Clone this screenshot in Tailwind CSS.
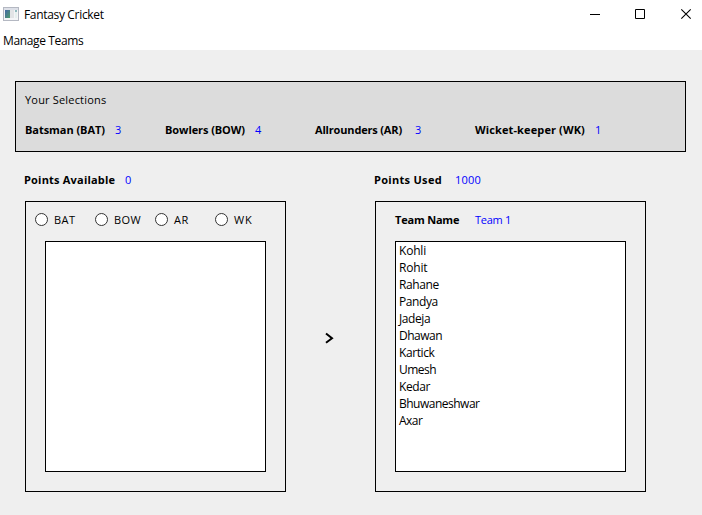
<!DOCTYPE html>
<html lang="en">
<head>
<meta charset="utf-8">
<title>Fantasy Cricket</title>
<script src="https://cdn.jsdelivr.net/npm/@tailwindcss/browser@4"></script>
</head>
<body class="w-[702px] h-[515px] overflow-hidden bg-[#efefef] text-black text-[12px] leading-[17px] whitespace-nowrap font-['Open_Sans',sans-serif] flex flex-col">
  <header class="h-[30px] shrink-0 bg-white flex items-center pl-[3px] tracking-[-0.33px]">
    <svg class="w-[16px] h-[14px] mr-[5px] -mt-[2px]" viewBox="0 0 16 14">
      <defs><linearGradient id="g" x1="0" y1="0" x2="1" y2="1"><stop offset="0" stop-color="#4568a6"/><stop offset="1" stop-color="#4f9c6c"/></linearGradient></defs>
      <rect x=".5" y=".5" width="15" height="13" fill="#f4f5f7" stroke="#b4b8c2"/>
      <rect x="1" y="1" width="14" height="2" fill="#dde0e8"/>
      <rect x="2" y="3" width="5" height="8" fill="url(#g)"/>
      <rect x="7" y="3" width="4" height="8" fill="#e2e4e6"/>
      <rect x="12" y="3" width="2" height="2" fill="#8fb9bd"/>
      <rect x="12" y="5" width="2" height="6" fill="#e6f0ee"/>
    </svg>
    <h1 class="flex-1 pb-[2px]">Fantasy Cricket</h1>
    <svg class="w-[112px] h-[30px]" viewBox="590 0 112 30" fill="none" stroke="#000">
      <path d="M590 14.5h10M635.5 9.5h9v9h-9z"/>
      <path d="M681.3 9.3l9.4 9.4M690.7 9.3l-9.4 9.4" stroke-width="1.1"/>
    </svg>
  </header>
  <nav class="h-[20px] shrink-0 bg-white pl-[3px] pt-[2px] tracking-[-0.37px]">Manage Teams</nav>
  <main class="flex-1 pt-[31px] font-['Comic_Sans_MS','Open_Sans',sans-serif] text-[11px]">
    <section class="ml-[15px] w-[671px] h-[71px] border border-black bg-[#dcdcdc] pl-[9px] pt-[9px]">
      <p class="tracking-[0.18px]">Your Selections</p>
      <div class="flex mt-[13px]">
        <b class="w-[90px] tracking-[-0.05px]">Batsman (BAT)</b><span class="w-[50px] text-[#00f]">3</span>
        <b class="w-[90px] tracking-[-0.08px]">Bowlers (BOW)</b><span class="w-[60px] text-[#00f]">4</span>
        <b class="w-[100px] tracking-[-0.17px]">Allrounders (AR)</b><span class="w-[60px] text-[#00f]">3</span>
        <b class="w-[120px] tracking-[0.12px]">Wicket-keeper (WK)</b><span class="text-[#00f]">1</span>
      </div>
    </section>
    <div class="flex pl-[25px] pt-[19px]">
      <section class="w-[261px]">
        <div class="flex h-[30px]"><b class="-ml-px w-[101px] tracking-[0.2px]">Points Available</b><span class="text-[#00f]">0</span></div>
        <div class="h-[291px] border border-black px-[19px] pt-[9px]">
          <div class="flex -ml-[10px] h-[30px] items-start">
            <label class="flex w-[60px] tracking-[0.5px]"><i class="w-[13px] h-[13px] mt-[2px] mr-[6px] rounded-full border border-[#333] bg-white"></i>BAT</label>
            <label class="flex w-[60px] tracking-[0.4px]"><i class="w-[13px] h-[13px] mt-[2px] mr-[6px] rounded-full border border-[#333] bg-white"></i>BOW</label>
            <label class="flex w-[60px] tracking-[0.5px]"><i class="w-[13px] h-[13px] mt-[2px] mr-[6px] rounded-full border border-[#333] bg-white"></i>AR</label>
            <label class="flex tracking-[0.8px]"><i class="w-[13px] h-[13px] mt-[2px] mr-[6px] rounded-full border border-[#333] bg-white"></i>WK</label>
          </div>
          <div class="h-[231px] border border-black bg-white"></div>
        </div>
      </section>
      <div class="w-[89px] flex justify-center pt-[161px] pr-[2px]">
        <svg class="w-[9px] h-[12px]" viewBox="0 0 9 12" fill="none" stroke="#000" stroke-width="2"><path d="M1 1.5l6 4.7-6 4.5"/></svg>
      </div>
      <section class="w-[271px]">
        <div class="flex h-[30px]"><b class="-ml-px w-[81px] tracking-[0.3px]">Points Used</b><span class="text-[#00f] tracking-[0.2px]">1000</span></div>
        <div class="h-[291px] border border-black px-[19px] pt-[9px]">
          <div class="flex h-[30px]"><b class="w-[80px] tracking-[-0.2px]">Team Name</b><span class="text-[#00f] tracking-[-0.3px]">Team 1</span></div>
          <ul class="h-[231px] border border-black bg-white pl-[3px] font-['Open_Sans',sans-serif] text-[12px] tracking-[-0.4px]">
            <li class="tracking-[-0.2px]">Kohli</li><li class="tracking-[-0.2px]">Rohit</li><li>Rahane</li><li>Pandya</li><li>Jadeja</li><li class="tracking-[-0.5px]">Dhawan</li><li>Kartick</li><li class="tracking-[-0.5px]">Umesh</li><li>Kedar</li><li class="tracking-[-0.5px]">Bhuwaneshwar</li><li class="tracking-[-0.5px]">Axar</li>
          </ul>
        </div>
      </section>
    </div>
  </main>
</body>
</html>
